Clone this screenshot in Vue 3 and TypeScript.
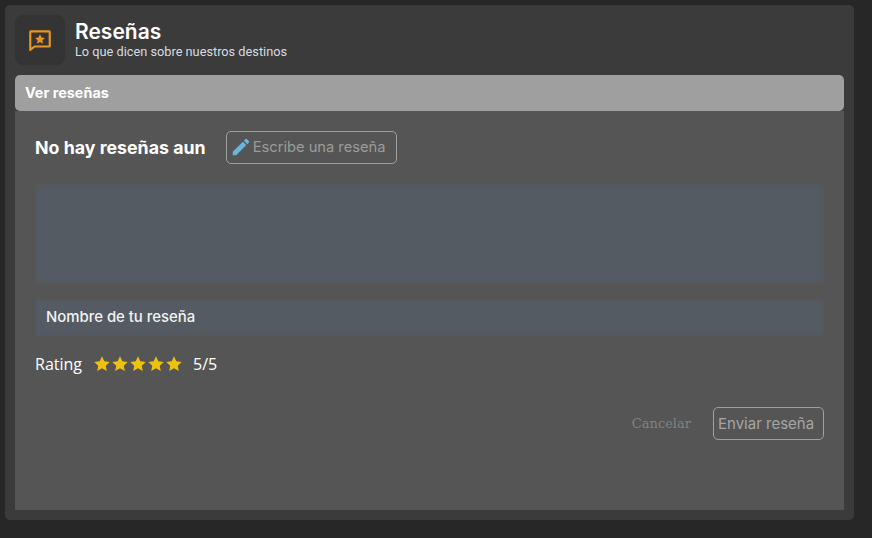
<script setup lang="ts">
const stars = [1, 2, 3, 4, 5];
</script>

<template>
  <div class="backdrop">
    <section class="modal">
      <header class="modal-header">
        <div class="header-icon">
          <svg viewBox="0 0 24 24" width="26" height="26" fill="none">
            <path d="M3.5 4h17a.5.5 0 0 1 .5.5v13a.5.5 0 0 1-.5.5H7l-4 3.2V4.5a.5.5 0 0 1 .5-.5z" stroke="#e8961e" stroke-width="2" stroke-linejoin="round" />
            <path d="M12 6.8l1.4 2.9 3.1.4-2.3 2.2.6 3.1-2.8-1.5-2.8 1.5.6-3.1-2.3-2.2 3.1-.4z" fill="#e8961e" />
          </svg>
        </div>
        <div class="header-text">
          <h1>Reseñas</h1>
          <p>Lo que dicen sobre nuestros destinos</p>
        </div>
      </header>

      <div class="tab-bar">Ver reseñas</div>

      <div class="content">
        <div class="empty-row">
          <h2>No hay reseñas aun</h2>
          <button type="button" class="write-button">
            <svg viewBox="0 0 24 24" width="22" height="22">
              <path d="M3 17.25V21h3.75L17.8 9.94l-3.75-3.75L3 17.25zM20.7 7.04a1 1 0 0 0 0-1.41l-2.34-2.34a1 1 0 0 0-1.41 0l-1.83 1.83 3.75 3.75 1.83-1.83z" fill="#6db5d8" />
            </svg>
            <span>Escribe una reseña</span>
          </button>
        </div>

        <div class="field-area"></div>
        <div class="field-name">Nombre de tu reseña</div>

        <div class="rating-row">
          <span class="rating-label">Rating</span>
          <span class="stars">
            <svg v-for="s in stars" :key="s" viewBox="0 0 24 24" width="18" height="18">
              <path d="M12 1.8l3.1 6.6 7.2.9-5.3 5 1.4 7.1-6.4-3.6-6.4 3.6 1.4-7.1-5.3-5 7.2-.9z" fill="#edc20f" />
            </svg>
          </span>
          <span class="rating-value">5/5</span>
        </div>

        <div class="actions">
          <button type="button" class="cancel">Cancelar</button>
          <button type="button" class="send">Enviar reseña</button>
        </div>
      </div>
    </section>
  </div>
</template>

<style>
html,
body {
  margin: 0;
  background: #272727;
}
</style>

<style scoped>
.backdrop {
  width: 872px;
  height: 538px;
  box-sizing: border-box;
  padding: 5px 18px 18px 5px;
  background: #272727;
  overflow: hidden;
}

.modal {
  display: flex;
  flex-direction: column;
  gap: 10px;
  height: 100%;
  box-sizing: border-box;
  padding: 10px;
  background: #3b3b3b;
  border-radius: 5px;
  font-family: Inter, "Open Sans", sans-serif;
}

.modal-header {
  display: flex;
  align-items: center;
  gap: 10px;
  height: 50px;
}

.header-icon {
  display: grid;
  place-items: center;
  width: 50px;
  height: 50px;
  background: #343434;
  border-radius: 8px;
}

.header-text h1 {
  margin: 0;
  color: #ffffff;
  font-size: 21px;
  font-weight: 600;
  line-height: 24px;
}

.header-text p {
  margin: 0;
  color: #d6dbe0;
  font-family: Roboto, sans-serif;
  font-size: 12.75px;
  line-height: 16px;
}

.tab-bar {
  flex: none;
  height: 36px;
  box-sizing: border-box;
  padding-left: 10px;
  color: #ffffff;
  background: #9f9f9f;
  border-radius: 5px;
  font-size: 14.4px;
  font-weight: 700;
  line-height: 36px;
}

.content {
  flex: 1;
  margin-top: -10px;
  padding: 20px;
  background: #555555;
}

.empty-row {
  display: flex;
  align-items: center;
  gap: 20px;
  height: 33px;
}

.empty-row h2 {
  margin: 0 0 1px;
  color: #ffffff;
  font-size: 17.8px;
  font-weight: 700;
}

.write-button {
  display: flex;
  align-items: center;
  gap: 1px;
  width: 171px;
  height: 33px;
  box-sizing: border-box;
  padding: 0 3px 1px;
  color: #9b9b9b;
  background: transparent;
  border: 1px solid #a0a0a0;
  border-radius: 5px;
  font-family: Inter, sans-serif;
  font-size: 14.7px;
  white-space: nowrap;
}

.field-area {
  height: 100px;
  margin-top: 20px;
  background: #555b62;
  box-shadow: inset 0 0 4px #555555;
}

.field-name {
  height: 37px;
  margin-top: 15px;
  padding-left: 11px;
  color: #f2f2f2;
  background: #555b62;
  box-shadow: inset 0 0 3px #555555;
  font-size: 14.9px;
  font-weight: 500;
  line-height: 36px;
}

.rating-row {
  display: flex;
  align-items: center;
  height: 24px;
  margin-top: 16px;
  color: #ffffff;
  font-family: "Open Sans", sans-serif;
  font-size: 16px;
}

.stars {
  display: flex;
  margin-left: 11px;
}

.rating-value {
  margin-left: 10px;
}

.actions {
  display: flex;
  align-items: center;
  justify-content: flex-end;
  gap: 22px;
  margin-top: 31px;
}

.cancel {
  padding: 0;
  color: #828282;
  background: none;
  border: 0;
  font-family: "DejaVu Serif", serif;
  font-size: 13px;
}

.send {
  width: 111px;
  height: 33px;
  padding: 0 0 1px 4px;
  color: #a5a5a5;
  background: transparent;
  border: 1px solid #a0a0a0;
  border-radius: 5px;
  font-family: Inter, sans-serif;
  font-size: 15px;
  text-align: left;
  white-space: nowrap;
}
</style>
